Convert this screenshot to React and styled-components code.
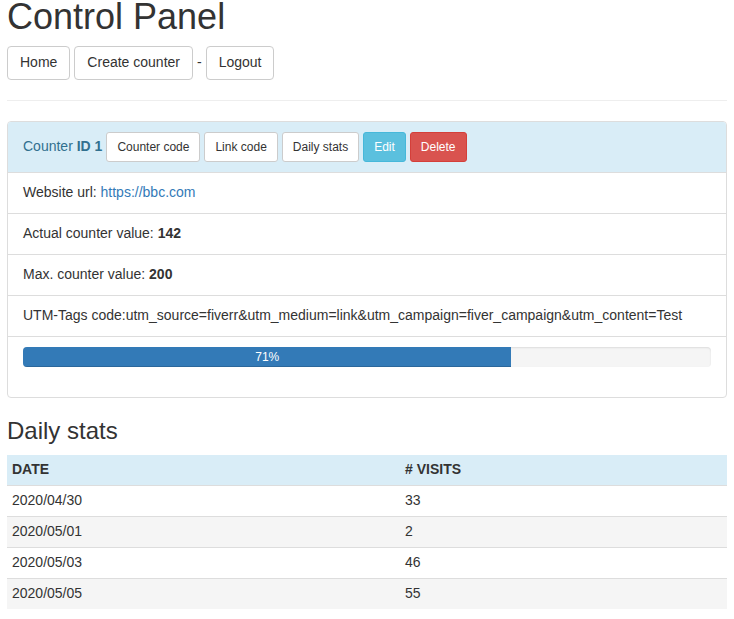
import React from "react";
import styled, { createGlobalStyle } from "styled-components";

const Global = createGlobalStyle`
  html, body { margin: 0; padding: 0; background: #fff; }
  body {
    font-family: "Liberation Sans", Arial, Helvetica, sans-serif;
    font-size: 14px;
    line-height: 1.42857;
    color: #333;
  }
  * { box-sizing: border-box; }
`;

const Page = styled.div`
  padding: 0 7px;
`;

const Title = styled.h1`
  font-size: 36px;
  font-weight: 500;
  line-height: 40px;
  margin: -3px 0 9px;
`;

const Nav = styled.div`
  display: flex;
  align-items: center;
  gap: 4px;
`;

const Sep = styled.span``;

const Btn = styled.button`
  font-family: inherit;
  display: inline-block;
  border-radius: ${p => (p.$sm ? "3px" : "4px")};
  padding: ${p => (p.$sm ? "5px 10px" : "6px 12px")};
  font-size: ${p => (p.$sm ? "12px" : "14px")};
  line-height: ${p => (p.$sm ? "1.5" : "1.42857")};
  cursor: pointer;
  border: 1px solid
    ${p => (p.$variant === "info" ? "#46b8da" : p.$variant === "danger" ? "#d43f3a" : "#ccc")};
  background: ${p => (p.$variant === "info" ? "#5bc0de" : p.$variant === "danger" ? "#d9534f" : "#fff")};
  color: ${p => (p.$variant ? "#fff" : "#333")};
`;

const Rule = styled.hr`
  margin: 20px 0;
  border: 0;
  border-top: 1px solid #eee;
`;

const Panel = styled.div`
  border: 1px solid #ddd;
  border-radius: 4px;
  margin-bottom: 20px;
  overflow: hidden;
`;

const PanelHeading = styled.div`
  background: #d9edf7;
  color: #31708f;
  padding: 10px 15px;
  display: flex;
  align-items: center;
  gap: 4px;
`;

const HeadLabel = styled.span``;

const Item = styled.div`
  padding: 10px 15px;
  border-top: 1px solid #ddd;
`;

const Link = styled.a`
  color: #337ab7;
  text-decoration: none;
`;

const Progress = styled.div`
  height: 20px;
  margin: 0 0 20px;
  background: #f5f5f5;
  border-radius: 4px;
  box-shadow: inset 0 1px 2px rgba(0, 0, 0, 0.1);
  overflow: hidden;
`;

const Bar = styled.div`
  height: 100%;
  background: #337ab7;
  color: #fff;
  font-size: 12px;
  line-height: 20px;
  text-align: center;
  box-shadow: inset 0 -1px 0 rgba(0, 0, 0, 0.15);
`;

const SubTitle = styled.h3`
  font-size: 24px;
  font-weight: 500;
  line-height: 1.1;
  margin: 20px 0 11px;
`;

const Table = styled.table`
  width: 100%;
  border-collapse: collapse;
  border-spacing: 0;
`;

const Th = styled.th`
  text-align: left;
  text-transform: uppercase;
  font-weight: bold;
  padding: 5px;
  background: #d9edf7;
  border-bottom: 1px solid #ddd;
  width: ${p => p.$w || "auto"};
`;

const Tr = styled.tr`
  background: ${p => (p.$striped ? "#f5f5f5" : "#fff")};
`;

const Td = styled.td`
  padding: 5px;
  border-top: 1px solid #ddd;
`;

const rows = [
  ["2020/04/30", "33"],
  ["2020/05/01", "2"],
  ["2020/05/03", "46"],
  ["2020/05/05", "55"],
];

export default function App() {
  const pct = 71;
  return (
    <Page>
      <Global />
      <Title>Control Panel</Title>
      <Nav>
        <Btn>Home</Btn>
        <Btn>Create counter</Btn>
        <Sep>-</Sep>
        <Btn>Logout</Btn>
      </Nav>
      <Rule />
      <Panel>
        <PanelHeading>
          <HeadLabel>
            Counter <b>ID 1</b>
          </HeadLabel>
          <Btn $sm>Counter code</Btn>
          <Btn $sm>Link code</Btn>
          <Btn $sm>Daily stats</Btn>
          <Btn $sm $variant="info">Edit</Btn>
          <Btn $sm $variant="danger">Delete</Btn>
        </PanelHeading>
        <Item>
          Website url: <Link href="#">https://bbc.com</Link>
        </Item>
        <Item>
          Actual counter value: <b>142</b>
        </Item>
        <Item>
          Max. counter value: <b>200</b>
        </Item>
        <Item>
          UTM-Tags code:utm_source=fiverr&amp;utm_medium=link&amp;utm_campaign=fiver_campaign&amp;utm_content=Test
        </Item>
        <Item>
          <Progress>
            <Bar style={{ width: `${pct}%` }}>{pct}%</Bar>
          </Progress>
        </Item>
      </Panel>
      <SubTitle>Daily stats</SubTitle>
      <Table>
        <thead>
          <tr>
            <Th $w="393px">Date</Th>
            <Th># Visits</Th>
          </tr>
        </thead>
        <tbody>
          {rows.map(([d, v], i) => (
            <Tr key={d} $striped={i % 2 === 1}>
              <Td>{d}</Td>
              <Td>{v}</Td>
            </Tr>
          ))}
        </tbody>
      </Table>
    </Page>
  );
}
